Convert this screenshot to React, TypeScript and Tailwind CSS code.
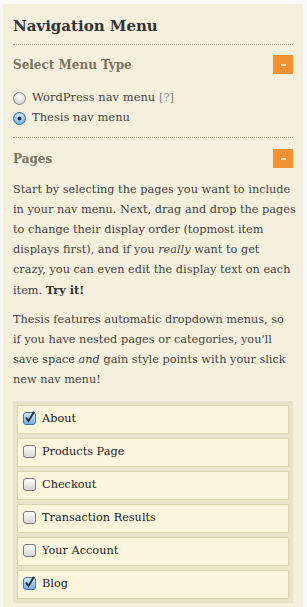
import React from "react";

const pages = [
  { title: "About", checked: true },
  { title: "Products Page", checked: false },
  { title: "Checkout", checked: false },
  { title: "Transaction Results", checked: false },
  { title: "Your Account", checked: false },
  { title: "Blog", checked: true },
];

function Radio({ on }: { on?: boolean }) {
  return (
    <svg width="13" height="13" viewBox="0 0 13 13" className="shrink-0">
      <defs>
        <radialGradient id={on ? "rOn" : "rOff"} cx="50%" cy="35%" r="65%">
          <stop offset="0%" stopColor={on ? "#e8f4ff" : "#ffffff"} />
          <stop offset="100%" stopColor={on ? "#6aa7e6" : "#cfcfcf"} />
        </radialGradient>
      </defs>
      <circle cx="6.5" cy="6.5" r="6" fill={`url(#${on ? "rOn" : "rOff"})`} stroke={on ? "#3b6fa8" : "#8a8a8a"} />
      {on && <circle cx="6.5" cy="6.5" r="2" fill="#1c2a3a" />}
    </svg>
  );
}

function Check({ on }: { on?: boolean }) {
  return (
    <svg width="13" height="14" viewBox="0 0 13 14" className="shrink-0 -mt-[3px]">
      <defs>
        <linearGradient id={on ? "cOn" : "cOff"} x1="0" y1="0" x2="0" y2="1">
          <stop offset="0%" stopColor={on ? "#d6ecff" : "#ffffff"} />
          <stop offset="100%" stopColor={on ? "#6fa9e2" : "#d4d4d4"} />
        </linearGradient>
      </defs>
      <rect x="0.5" y="1.5" width="12" height="12" rx="2.5" fill={`url(#${on ? "cOn" : "cOff"})`} stroke={on ? "#4a76a8" : "#7d7d7d"} />
      {on && <path d="M3 6.5 L5.5 10 L11 0.8" fill="none" stroke="#1d2b3c" strokeWidth="1.8" />}
    </svg>
  );
}

function Toggle() {
  return (
    <button className="w-5 h-[19px] bg-[#ef922f] flex items-center justify-center">
      <span className="block w-[5px] h-[2px] bg-[#fde7c8]"></span>
    </button>
  );
}

export default function App() {
  return (
    <div className="min-h-screen bg-[#f9f9f8] pt-1 pl-[3px] pr-1 font-['DejaVu_Serif',serif]">
      <div className="bg-[#f5f0dd] min-h-[603px] px-[10px] pt-[9px] pb-1">
        {/* Header */}
        <h1 className="text-[15px] font-bold text-[#333] leading-[26px] pb-[5px] border-b border-dotted border-[#b5a98a]">
          Navigation Menu
        </h1>

        {/* Menu type */}
        <div className="flex items-center justify-between pt-[10px]">
          <h3 className="text-[12px] font-bold text-[#7b7260]">Select Menu Type</h3>
          <Toggle />
        </div>
        <div className="pt-[14px] pb-[9px] border-b border-dotted border-[#b5a98a] text-[11.5px] text-[#444]">
          <label className="flex items-center gap-[6px] h-5">
            <Radio />
            <span>WordPress nav menu <span className="text-[#888]">[?]</span></span>
          </label>
          <label className="flex items-center gap-[6px] h-5">
            <Radio on />
            <span>Thesis nav menu</span>
          </label>
        </div>

        {/* Pages */}
        <div className="flex items-center justify-between pt-[11px]">
          <h3 className="text-[12px] font-bold text-[#7b7260]">Pages</h3>
          <Toggle />
        </div>
        <div className="text-[11.3px] leading-[20px] text-[#444] pt-[12px] whitespace-nowrap">
          <p>
            Start by selecting the pages you want to include<br />
            in your nav menu. Next, drag and drop the pages<br />
            to change their display order (topmost item<br />
            displays first), and if you <em>really</em> want to get<br />
            crazy, you can even edit the display text on each<br />
            item. <strong className="text-[#333]">Try it!</strong>
          </p>
          <p className="mt-[9px]">
            Thesis features automatic dropdown menus, so<br />
            if you have nested pages or categories, you'll<br />
            save space <em>and</em> gain style points with your slick<br />
            new nav menu!
          </p>
        </div>

        {/* Page list */}
        <ul className="mt-[11px] bg-[#e9e3c9] p-1 flex flex-col gap-1">
          {pages.map((p) => (
            <li
              key={p.title}
              className="h-[29px] bg-[#fcf6dd] border border-[#dcd3af] flex items-center gap-[6px] px-[5px] text-[11.3px] text-[#222]"
            >
              <Check on={p.checked} />
              <span>{p.title}</span>
            </li>
          ))}
        </ul>
      </div>
    </div>
  );
}
